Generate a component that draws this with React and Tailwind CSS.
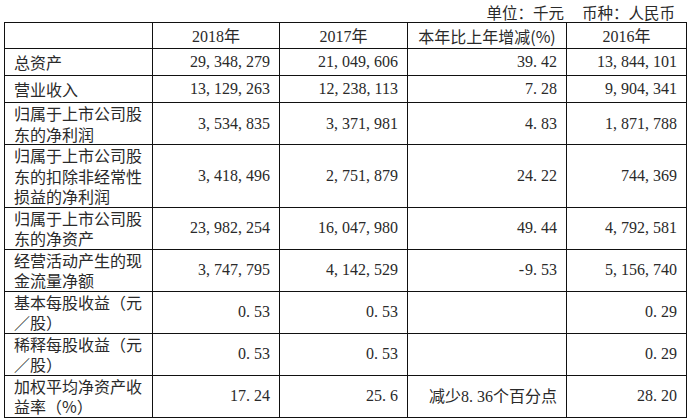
const rows = [
  { label: ['总资产'], v: ['29,348,279', '21,049,606', '39.42', '13,844,101'] },
  { label: ['营业收入'], v: ['13,129,263', '12,238,113', '7.28', '9,904,341'] },
  { label: ['归属于上市公司股', '东的净利润'], v: ['3,534,835', '3,371,981', '4.83', '1,871,788'] },
  { label: ['归属于上市公司股', '东的扣除非经常性', '损益的净利润'], v: ['3,418,496', '2,751,879', '24.22', '744,369'] },
  { label: ['归属于上市公司股', '东的净资产'], v: ['23,982,254', '16,047,980', '49.44', '4,792,581'] },
  { label: ['经营活动产生的现', '金流量净额'], v: ['3,747,795', '4,142,529', '-9.53', '5,156,740'] },
  { label: ['基本每股收益（元', '／股）'], v: ['0.53', '0.53', '', '0.29'] },
  { label: ['稀释每股收益（元', '／股）'], v: ['0.53', '0.53', '', '0.29'] },
  { label: ['加权平均净资产收', '益率（%）'], v: ['17.24', '25.6', '减少8.36个百分点', '28.20'] },
]

const cjk = { fontFamily: '"Noto Sans CJK SC", sans-serif' }

// SimSun-style half-width punctuation: pad commas and dots out to a digit's width
function Num({ text }) {
  if (/[\u4e00-\u9fff]/.test(text)) {
    const parts = text.split(/(8\.36)/)
    return (
      <span style={cjk}>
        {parts.map((p, i) =>
          p === '8.36' ? (
            <span key={i} className="font-['Liberation_Serif',serif]">
              8<span className="mr-[4px]">.</span>36
            </span>
          ) : (
            <span key={i}>{p}</span>
          )
        )}
      </span>
    )
  }
  return (
    <span>
      {text.split('').map((c, i) =>
        c === ',' || c === '.' ? (
          <span key={i} className="mr-[4px]">{c}</span>
        ) : c === '-' ? (
          <span key={i} className="mr-[1px]">-</span>
        ) : (
          <span key={i}>{c}</span>
        )
      )}
    </span>
  )
}

export default function App() {
  return (
    <div className="w-[690px] h-[419px] bg-white text-[#2a2a2a] font-['Liberation_Serif',serif]">
      <div className="h-[22px] pt-[3px] pr-[15px] flex justify-end gap-[18px] text-[15.5px] leading-[19px]" style={cjk}>
        <span>单位：千元</span>
        <span>币种：人民币</span>
      </div>
      <table className="ml-[4px] w-[682px] table-fixed border-collapse text-[16px]">
        <colgroup>
          <col className="w-[148px]" />
          <col className="w-[127px]" />
          <col className="w-[128px]" />
          <col className="w-[159px]" />
          <col className="w-[120px]" />
        </colgroup>
        <thead>
          <tr className="h-[26px]">
            <th className="border border-[#111] font-normal"></th>
            <th className="border border-[#111] font-normal text-center leading-[20px]">
              2018<span style={cjk}>年</span>
            </th>
            <th className="border border-[#111] font-normal text-center leading-[20px]">
              2017<span style={cjk}>年</span>
            </th>
            <th className="border border-[#111] font-normal text-center leading-[20px]" style={cjk}>
              本年比上年增减(%)
            </th>
            <th className="border border-[#111] font-normal text-center leading-[20px]">
              2016<span style={cjk}>年</span>
            </th>
          </tr>
        </thead>
        <tbody>
          {rows.map((r, i) => (
            <tr key={i} className={r.label.length === 1 ? 'h-[27px]' : ''}>
              <td className="border border-[#111] pl-[9px] pr-0 py-0 leading-[20.5px] align-middle whitespace-pre" style={cjk}>
                {r.label.join('\n')}
              </td>
              {r.v.map((v, j) => (
                <td key={j} className="border border-[#111] pr-[9px] py-0 text-right align-middle leading-[20px] whitespace-nowrap">
                  {v && <Num text={v} />}
                </td>
              ))}
            </tr>
          ))}
        </tbody>
      </table>
    </div>
  )
}
